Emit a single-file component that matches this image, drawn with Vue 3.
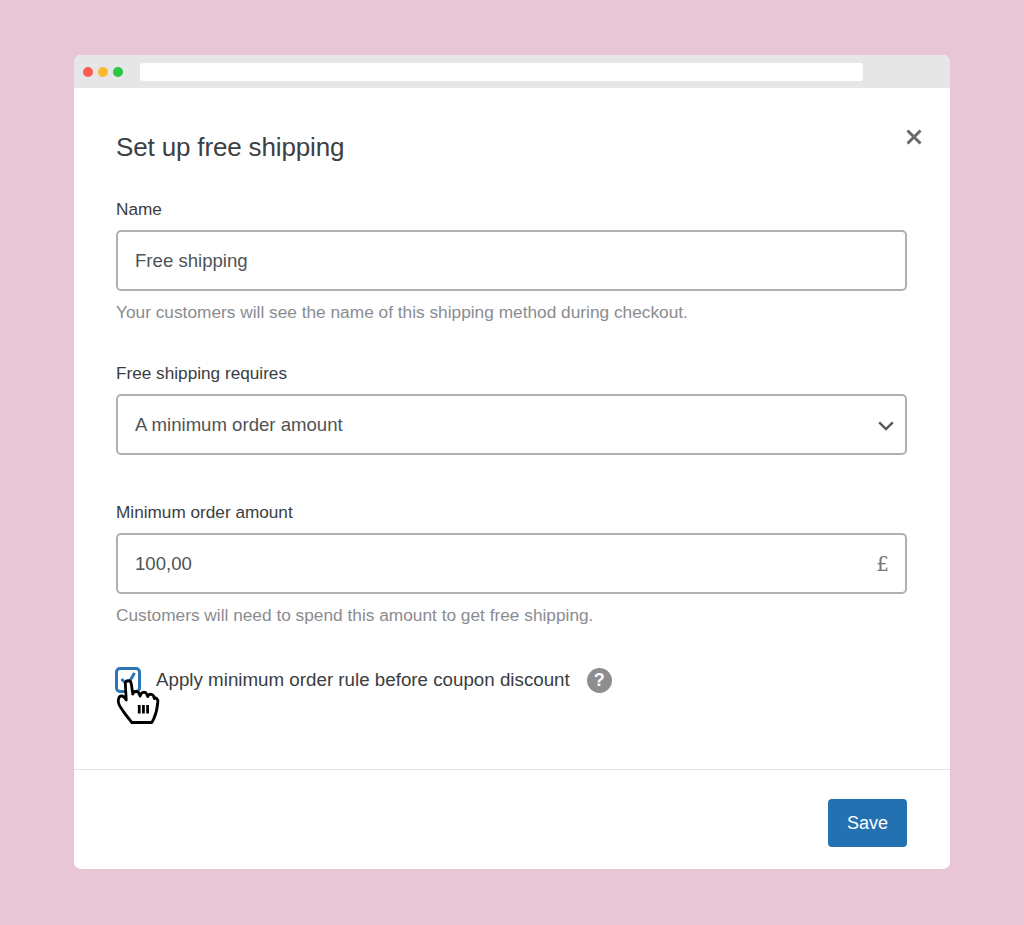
<template>
  <div class="page">
    <div class="window">
      <div class="chrome">
        <span class="dot red"></span>
        <span class="dot amber"></span>
        <span class="dot green"></span>
        <div class="address"></div>
      </div>

      <div class="body">
        <button class="close" aria-label="Close">
          <svg viewBox="0 0 16 16" fill="none" stroke="#666a6d" stroke-width="3"><path d="M1.500 1.500 14.500 14.500M14.500 1.500 1.500 14.500"/></svg>
        </button>
        <h1 class="title">Set up free shipping</h1>

        <label class="label">Name</label>
        <div class="field">Free shipping</div>
        <p class="hint">Your customers will see the name of this shipping method during checkout.</p>

        <label class="label second">Free shipping requires</label>
        <div class="field">
          A minimum order amount
          <svg class="chevron" viewBox="0 0 16 10" fill="none" stroke="#55585b" stroke-width="2.4"><path d="M1.200 1.400 8 8 14.800 1.400"/></svg>
        </div>

        <label class="label third">Minimum order amount</label>
        <div class="field">
          100,00
          <span class="suffix">£</span>
        </div>
        <p class="hint">Customers will need to spend this amount to get free shipping.</p>

        <div class="check-row">
          <span class="checkbox">
            <svg class="tick" viewBox="0 0 20 20" fill="none" stroke="#2a76b6" stroke-width="3"><path d="M3.500 9 9.500 15 16.500 3"/></svg>
            <svg class="hand" viewBox="0 0 56 66" preserveAspectRatio="none">
              <path d="M16.500 22C16.500 17.500 22.500 17.500 23 22L24.500 32C25.500 29 29.500 28.500 31 31L32.500 34C33.500 29.500 38 29.500 39.500 32L40.700 34.500C41.500 31.500 45.500 31.500 47 34L47.700 36.500C49.500 35 51.800 37 51.500 40C51 46 49.500 52 47 57L45 60.500H23.500L18 54C15 50 11.500 46.500 9.500 42C8 38 9.500 33.500 13 34C15 34.300 16.500 36.500 17.500 38Z" fill="#fff" stroke="#000" stroke-width="3" stroke-linejoin="round"/>
              <path d="M31.500 43V51.500M36 43V51.500M40.500 43V51.500" stroke="#000" stroke-width="3" fill="none"/>
            </svg>
          </span>
          <span class="check-label">Apply minimum order rule before coupon discount</span>
          <span class="help">?</span>
        </div>
      </div>

      <div class="footer">
        <button class="save">Save</button>
      </div>
    </div>
  </div>
</template>

<script setup>
</script>

<style>
html, body { margin: 0; background: #e8c6d6; }
</style>

<style scoped>
.page {
  width: 1024px;
  height: 925px;
  box-sizing: border-box;
  padding: 55px 74px 56px;
  background: #e8c6d6;
  font-family: "Liberation Sans", Arial, sans-serif;
  color: #3a3d40;
}

.window {
  width: 876px;
  height: 814px;
  background: #fff;
  border-radius: 7px;
  overflow: hidden;
  display: flex;
  flex-direction: column;
}

.chrome {
  height: 33px;
  flex: none;
  background: #e6e6e6;
  display: flex;
  align-items: center;
  padding: 0 87px 0 9px;
  gap: 5px;
}
.dot { width: 10px; height: 10px; border-radius: 50%; }
.red { background: #ff5b56; }
.amber { background: #fdb92c; }
.green { background: #27c73f; }
.address {
  flex: 1;
  height: 18px;
  margin-left: 12px;
  margin-top: 1px;
  background: #fff;
  border-radius: 3px;
}

.body {
  flex: 1;
  position: relative;
  padding: 42px 43px 0 42px;
}

.close {
  position: absolute;
  top: 41px;
  right: 28px;
  width: 16px;
  height: 16px;
  padding: 0;
  border: 0;
  background: none;
}
.close svg { display: block; width: 16px; height: 16px; }

.title {
  margin: 0 0 34px;
  font-size: 26px;
  letter-spacing: -0.15px;
  line-height: 34px;
  font-weight: 400;
  color: #3c4043;
}

.label {
  display: block;
  margin-bottom: 10px;
  font-size: 17.2px;
  line-height: 22px;
  color: #3a3d40;
}
.second { margin-top: 39px; }
.third { margin-top: 46px; }

.field {
  position: relative;
  height: 61px;
  box-sizing: border-box;
  padding: 0 17px;
  display: flex;
  align-items: center;
  border: 2px solid #aeb0b2;
  border-radius: 5px;
  font-size: 18.6px;
  color: #505356;
}

.chevron {
  position: absolute;
  right: 11px;
  top: 25px;
  width: 16px;
  height: 10px;
}
.suffix {
  position: absolute;
  right: 16px;
  font-family: "DejaVu Serif", serif;
  font-size: 20px;
  color: #77797b;
}

.hint {
  margin: 10px 0 0;
  font-size: 17.3px;
  line-height: 22px;
  color: #8a8c8f;
}

.check-row {
  margin-top: 41px;
  height: 26px;
  display: flex;
  align-items: center;
  margin-left: -1px;
}
.checkbox {
  position: relative;
  width: 26px;
  height: 26px;
  box-sizing: border-box;
  border: 3px solid #2a76b6;
  border-radius: 5px;
  flex: none;
}
.tick { display: block; width: 20px; height: 20px; }
.hand {
  position: absolute;
  left: -8px;
  top: -8px;
  width: 52px;
  height: 66px;
}
.check-label {
  margin-left: 15px;
  font-size: 18.75px;
  color: #3a3d40;
}
.help {
  margin-left: 17px;
  width: 25px;
  height: 25px;
  border-radius: 50%;
  background: #8e8e8e;
  color: #fff;
  font-size: 18px;
  font-weight: 700;
  display: flex;
  align-items: center;
  justify-content: center;
}

.footer {
  height: 100px;
  box-sizing: border-box;
  flex: none;
  border-top: 1px solid #e2e2e2;
  display: flex;
  justify-content: flex-end;
  padding: 29px 43px 0 0;
}
.save {
  width: 79px;
  height: 48px;
  border: 0;
  border-radius: 4px;
  background: #2471b1;
  color: #fff;
  font-family: inherit;
  font-size: 18px;
}
</style>
